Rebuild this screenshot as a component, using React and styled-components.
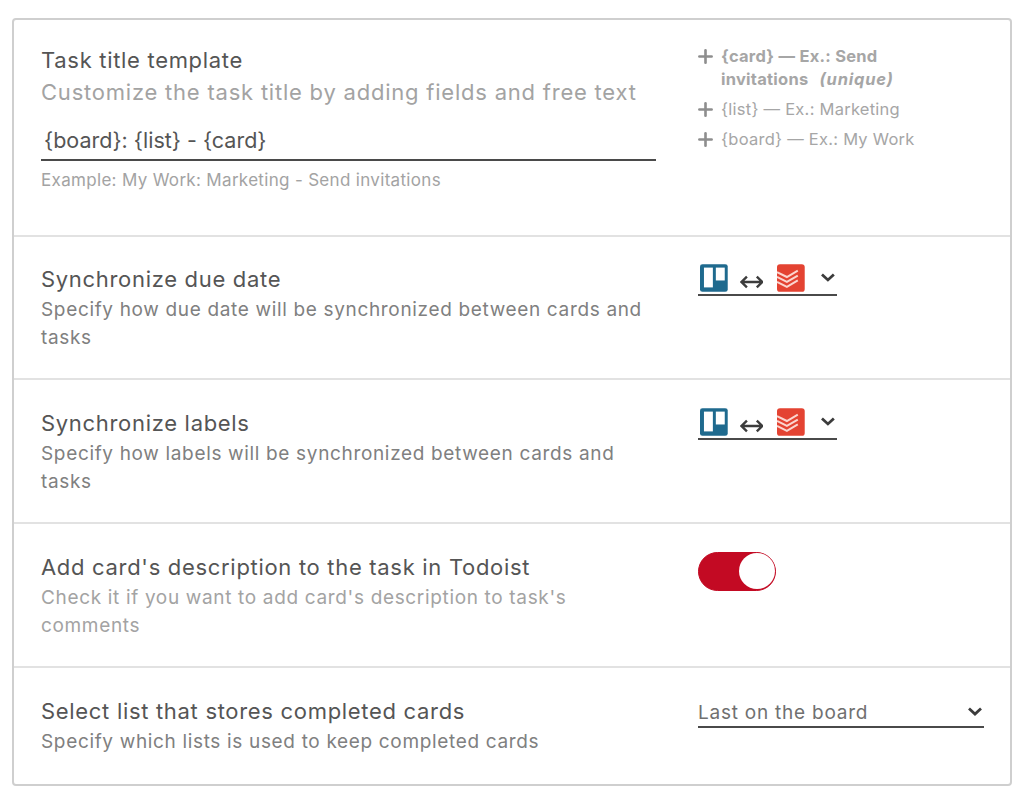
import styled, { createGlobalStyle } from "styled-components";
import { Plus } from "lucide-react";

const Global = createGlobalStyle`
  html, body {
    margin: 0;
    background: #fff;
  }
  body {
    font-family: Inter, "Noto Sans", sans-serif;
    color: #555;
  }
`;

const Page = styled.div`
  padding: 18px 12px 0;
`;

const Card = styled.div`
  width: 1000px;
  height: 768px;
  box-sizing: border-box;
  border: 2px solid #cfcfcf;
  border-radius: 4px;
  display: flex;
  flex-direction: column;
`;

const Row = styled.section`
  height: ${(props) => props.$height}px;
  box-sizing: border-box;
  padding: ${(props) => props.$top}px 27px 0;
  display: grid;
  grid-template-columns: 615px 286px;
  column-gap: 42px;
  border-bottom: ${(props) => (props.$last ? "none" : "2px solid #e2e2e2")};
`;

const Title = styled.h3`
  margin: 0;
  font-size: 22px;
  line-height: 28px;
  font-weight: 400;
  letter-spacing: 0.69px;
  color: #555;
`;

const Lead = styled.p`
  margin: 3px 0 0;
  font-size: 22px;
  line-height: 30px;
  letter-spacing: 0.78px;
  color: #a3a3a3;
`;

const Desc = styled.p`
  margin: 3px 0 0;
  font-size: 19px;
  line-height: 28px;
  letter-spacing: 0.66px;
  color: ${(props) => (props.$muted ? "#a3a3a3" : "#808080")};
`;

const TemplateInput = styled.div`
  margin-top: 16px;
  height: 38px;
  box-sizing: border-box;
  padding-left: 3px;
  border-bottom: 2px solid #4a4a4a;
  font-size: 21.5px;
  line-height: 34px;
  color: #555;
`;

const Hint = styled.div`
  margin-top: 8px;
  font-size: 17px;
  line-height: 22px;
  letter-spacing: 0.32px;
  color: #a3a3a3;
`;

const Fields = styled.ul`
  margin: -1px 0 0;
  padding: 0;
  width: 240px;
  list-style: none;
  display: flex;
  flex-direction: column;
  gap: 7px;
`;

const Field = styled.li`
  display: grid;
  grid-template-columns: 23px 1fr;
  font-size: 16.5px;
  line-height: 23px;
  letter-spacing: 0.25px;
  font-weight: ${(props) => (props.$strong ? 700 : 400)};
  color: #a6a6a6;

  svg {
    margin-top: 1px;
    margin-left: -3px;
    color: #8e8e8e;
  }

  em {
    margin-left: 7px;
    letter-spacing: 0.8px;
  }
`;

const SyncSelect = styled.div`
  width: 139px;
  height: 32px;
  box-sizing: border-box;
  margin-top: -1px;
  border-bottom: 2px solid #4a4a4a;
  display: flex;
  align-items: flex-start;
  gap: 12px;
  padding-left: 2px;

  & > svg:last-child {
    margin-left: 2px;
    margin-top: 5px;
  }
`;

const Arrows = styled.svg`
  margin-top: 11px;
  margin-right: 2px;
`;

const Switch = styled.div`
  width: 78px;
  height: 39px;
  box-sizing: border-box;
  margin-top: -1px;
  border-radius: 20px;
  border: 1.5px solid #c30a23;
  background: #c30a23;
  display: flex;
  justify-content: flex-end;
`;

const Knob = styled.div`
  width: 36px;
  height: 36px;
  border-radius: 50%;
  background: #fff;
`;

const ListSelect = styled.div`
  height: 29px;
  box-sizing: border-box;
  margin-top: 2px;
  border-bottom: 2px solid #4a4a4a;
  display: flex;
  justify-content: space-between;
  font-size: 19px;
  line-height: 27px;
  letter-spacing: 0.77px;
  color: #707070;

  svg {
    margin-top: 4px;
  }
`;

const Chevron = () => (
  <svg width="18" height="18" viewBox="0 0 18 18" fill="none">
    <path d="M3 5.500 9 11l6-5.500" stroke="#3c3c3c" strokeWidth="2.8" />
  </svg>
);

const TrelloIcon = () => (
  <svg width="28" height="28" viewBox="0 0 28 28">
    <rect width="28" height="28" rx="2.500" fill="#1f6a8e" />
    <rect x="4" y="3.500" width="9" height="20" fill="#fff" />
    <rect x="16" y="3.500" width="9" height="13" fill="#fff" />
  </svg>
);

const TodoistIcon = () => (
  <svg width="28" height="28" viewBox="0 0 28 28">
    <rect width="28" height="28" rx="3" fill="#e44332" />
    <path
      d="M0 8 10 13 21 6.500M0 13 10 18 21 11.500M0 18 10 23 21 16.500"
      fill="none"
      stroke="#fbd6d0"
      strokeWidth="2"
    />
  </svg>
);

const SyncDirection = () => (
  <SyncSelect>
    <TrelloIcon />
    <Arrows width="24" height="14" viewBox="0 0 24 14" fill="none">
      <path
        d="M7 1.500 1.500 7 7 12.500M17 1.500 22.500 7 17 12.500M2 7h20"
        stroke="#3c3c3c"
        strokeWidth="2.400"
      />
    </Arrows>
    <TodoistIcon />
    <Chevron />
  </SyncSelect>
);

export default function App() {
  return (
    <>
      <Global />
      <Page>
        <Card>
          <Row $height={217} $top={26}>
            <div>
              <Title>Task title template</Title>
              <Lead>Customize the task title by adding fields and free text</Lead>
              <TemplateInput>{"{board}: {list} - {card}"}</TemplateInput>
              <Hint>Example: My Work: Marketing - Send invitations</Hint>
            </div>
            <Fields>
              <Field $strong>
                <Plus size={21} strokeWidth={3} />
                <span>
                  {"{card} — Ex.: Send"}
                  <br />
                  {"invitations "}
                  <em>(unique)</em>
                </span>
              </Field>
              <Field>
                <Plus size={21} strokeWidth={3} />
                <span>{"{list} — Ex.: Marketing"}</span>
              </Field>
              <Field>
                <Plus size={21} strokeWidth={3} />
                <span>{"{board} — Ex.: My Work"}</span>
              </Field>
            </Fields>
          </Row>
          <Row $height={143} $top={28}>
            <div>
              <Title>Synchronize due date</Title>
              <Desc>Specify how due date will be synchronized between cards and tasks</Desc>
            </div>
            <SyncDirection />
          </Row>
          <Row $height={144} $top={29}>
            <div>
              <Title>Synchronize labels</Title>
              <Desc>Specify how labels will be synchronized between cards and tasks</Desc>
            </div>
            <SyncDirection />
          </Row>
          <Row $height={144} $top={29}>
            <div>
              <Title>Add card's description to the task in Todoist</Title>
              <Desc $muted>Check it if you want to add card's description to task's comments</Desc>
            </div>
            <Switch>
              <Knob />
            </Switch>
          </Row>
          <Row $height={116} $top={29} $last>
            <div>
              <Title>Select list that stores completed cards</Title>
              <Desc>Specify which lists is used to keep completed cards</Desc>
            </div>
            <ListSelect>
              Last on the board
              <Chevron />
            </ListSelect>
          </Row>
        </Card>
      </Page>
    </>
  );
}
